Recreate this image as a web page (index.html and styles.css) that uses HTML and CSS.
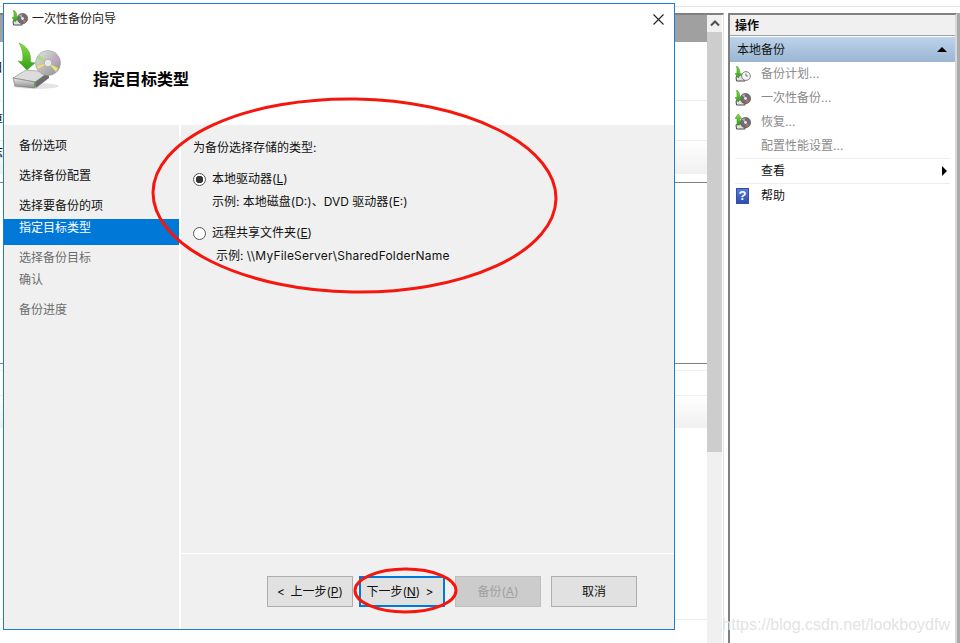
FILE: index.html
```html
<!DOCTYPE html>
<html lang="zh-CN">
<head>
  <meta charset="UTF-8">
  <meta name="viewport" content="width=device-width, initial-scale=1.0">
  <title>一次性备份向导</title>
  <link rel="stylesheet" href="styles.css">
</head>
<body>
  <svg class="defs" width="0" height="0" aria-hidden="true">
    <defs>
      <linearGradient id="green" x1="0" y1="0" x2="0" y2="1">
        <stop offset="0" stop-color="#8fdc45"/>
        <stop offset="1" stop-color="#2f9f18"/>
      </linearGradient>
      <linearGradient id="disc" x1="0" y1="0" x2="1" y2="1">
        <stop offset="0" stop-color="#e6e6e6"/>
        <stop offset="0.5" stop-color="#b9b9b9"/>
        <stop offset="1" stop-color="#8f8f8f"/>
      </linearGradient>
      <linearGradient id="drive" x1="0" y1="0" x2="0" y2="1">
        <stop offset="0" stop-color="#e8e8e8"/>
        <stop offset="1" stop-color="#8d8d8d"/>
      </linearGradient>
      <symbol id="arrow-down" viewBox="0 0 16 16">
        <path d="M1.5 0 C4 1.5 5 4 4.8 7.5 L6.5 7.5 L3.2 12 L0 7.5 L1.8 7.5 C2.2 5 2 2.5 1.5 0 Z" fill="url(#green)" stroke="#2a9414" stroke-width="0.5"/>
      </symbol>
      <symbol id="arrow-up" viewBox="0 0 16 16">
        <path d="M3.2 0 L6.6 4.5 L4.8 4.5 L4.8 11 L2 11 L2 4.5 L0 4.5 Z" fill="url(#green)" stroke="#2a9414" stroke-width="0.5"/>
      </symbol>
      <symbol id="small-drive" viewBox="0 0 16 16">
        <path d="M1 11 L4 9 L11 9 L10 15 L1.5 15 Z" fill="#e2e2e2" stroke="#4a4a4a" stroke-width="1"/>
      </symbol>
      <symbol id="small-disc" viewBox="0 0 16 16">
        <circle cx="10.5" cy="8.5" r="5.2" fill="#6f6f6f" stroke="#4d4d4d" stroke-width="0.5"/>
        <path d="M10.5 8.5 L7 5.5 L9.5 4 Z" fill="#c9a1c9"/>
        <path d="M10.5 8.5 L14 11.5 L12 13 Z" fill="#e06a6a"/>
        <circle cx="10.5" cy="8.5" r="1.4" fill="#e8e8e8"/>
      </symbol>
      <symbol id="small-clock" viewBox="0 0 16 16">
        <circle cx="11" cy="10" r="4.4" fill="#f4f4f4" stroke="#777" stroke-width="0.9"/>
        <path d="M11 7.5 V10 H13" fill="none" stroke="#555" stroke-width="0.8"/>
      </symbol>
    </defs>
  </svg>

  <div class="desktop">
    <div class="top-strip"></div>
    <div class="panes">
      <div class="main-wrap">
        <div class="main-pane">
          <div class="row band"></div>
          <div class="row row-a"><span class="cut">日</span></div>
          <div class="row row-b"><span class="cut">算</span></div>
          <div class="row row-c fade"><span class="cut">志</span></div>
          <div class="row row-d"></div>
          <div class="row row-e"></div>
          <div class="row row-f"></div>
          <div class="row row-g"></div>
          <div class="row row-h fade"></div>
          <div class="row row-i"></div>
        </div>
        <div class="scrollbar">
          <div class="scroll-btn">
            <svg width="10" height="7" viewBox="0 0 10 7"><path d="M1 5.5 L5 1.5 L9 5.5" fill="none" stroke="#505050" stroke-width="2"/></svg>
          </div>
          <div class="scroll-thumb"></div>
        </div>
      </div>

      <div class="actions">
        <div class="actions-head">操作</div>
        <div class="actions-group">
          <span>本地备份</span>
          <span class="caret-up"></span>
        </div>
        <div class="action off">
          <svg class="action-icon" width="16" height="16"><use href="#small-drive"/><use href="#small-clock"/><use href="#arrow-down"/></svg>
          备份计划...
        </div>
        <div class="action off">
          <svg class="action-icon" width="16" height="16"><use href="#small-drive"/><use href="#small-disc"/><use href="#arrow-down"/></svg>
          一次性备份...
        </div>
        <div class="action off">
          <svg class="action-icon" width="16" height="16"><use href="#small-drive"/><use href="#small-disc"/><use href="#arrow-up"/></svg>
          恢复...
        </div>
        <div class="action off no-icon">配置性能设置...</div>
        <div class="action-sep"></div>
        <div class="action no-icon">
          查看
          <span class="caret-right"></span>
        </div>
        <div class="action-sep"></div>
        <div class="action">
          <span class="help-icon">?</span>
          帮助
        </div>
      </div>
    </div>

    <div class="dialog">
      <div class="titlebar">
        <svg class="title-icon" width="16" height="16"><use href="#small-drive"/><use href="#small-disc"/><use href="#arrow-down"/></svg>
        <span class="title-text">一次性备份向导</span>
        <svg class="close" width="11" height="11" viewBox="0 0 11 11"><path d="M0.5 0.5 L10.5 10.5 M10.5 0.5 L0.5 10.5" stroke="#222" stroke-width="1.1"/></svg>
      </div>

      <div class="header">
        <svg class="header-icon" width="50" height="50" viewBox="0 0 50 50">
          <ellipse cx="24" cy="44" rx="23" ry="3" fill="#e4e4e4"/>
          <path d="M1 36 L14 28 L37 30 L23 40 Z" fill="#dcdcdc" stroke="#8a8a8a" stroke-width="0.6"/>
          <path d="M1 36 L23 40 L23 46 L3 44 Z" fill="url(#drive)" stroke="#6f6f6f" stroke-width="0.6"/>
          <path d="M23 40 L37 30 L37 36 L24 46 Z" fill="#6d6d6d"/>
          <rect x="22.4" y="40.5" width="1.6" height="4" fill="#34b12a"/>
          <circle cx="36" cy="21" r="12.5" fill="url(#disc)" stroke="#8c8c8c" stroke-width="0.5"/>
          <path d="M36 21 L25 17 L27 13 Z" fill="#a9dd7a"/>
          <path d="M36 21 L25 24 L26 27 Z" fill="#efe26c"/>
          <path d="M36 21 L47 18 L46 14 Z" fill="#d69ad2"/>
          <path d="M36 21 L46 26 L44 30 Z" fill="#e6e27c"/>
          <circle cx="36" cy="21" r="3.6" fill="#f3f3f3" stroke="#9a9a9a" stroke-width="0.6"/>
          <circle cx="36" cy="21" r="1.3" fill="#fff" stroke="#aaa" stroke-width="0.4"/>
          <path d="M7 1 C15 4 19.5 11 18.5 20 L23 21 L15 28 L6 19 L10.5 19.5 C11.5 13 10.5 7 7 1 Z" fill="url(#green)" stroke="#3da822" stroke-width="0.5"/>
        </svg>
        <h1 class="heading">指定目标类型</h1>
      </div>

      <div class="body">
        <div class="nav">
          <div class="nav-item">备份选项</div>
          <div class="nav-item">选择备份配置</div>
          <div class="nav-item tight">选择要备份的项</div>
          <div class="nav-item current">指定目标类型</div>
          <div class="nav-item tight off">选择备份目标</div>
          <div class="nav-item off">确认</div>
          <div class="nav-item off">备份进度</div>
        </div>

        <div class="content">
          <div class="options">
            <div class="prompt">为备份选择存储的类型:</div>
            <div class="radio-row">
              <span class="radio checked"></span>
              <span>本地驱动器(<u>L</u>)</span>
            </div>
            <div class="hint">示例: 本地磁盘(D:)、DVD 驱动器(E:)</div>
            <div class="radio-row second">
              <span class="radio"></span>
              <span>远程共享文件夹(<u>E</u>)</span>
            </div>
            <div class="hint shifted">示例: <span class="share-path">\\MyFileServer\SharedFolderName</span></div>
          </div>

          <div class="footer">
            <button class="btn wide-gap">&lt; 上一步(<u>P</u>)</button>
            <button class="btn primary">下一步(<u>N</u>) &gt;</button>
            <button class="btn disabled">备份(<u>A</u>)</button>
            <button class="btn">取消</button>
          </div>
        </div>
      </div>
    </div>

    <svg class="marks" width="960" height="643" viewBox="0 0 960 643">
      <ellipse cx="354.5" cy="195.5" rx="201.5" ry="96.5" transform="rotate(1 354.5 195.5)"/>
      <ellipse cx="405.5" cy="590.5" rx="50.5" ry="21.5"/>
    </svg>

    <div class="watermark">https://blog.csdn.net/lookboydfw</div>
  </div>
</body>
</html>
```

FILE: styles.css
```css
* {
  box-sizing: border-box;
}
html, body {
  margin: 0;
  padding: 0;
}
body {
  font-family: "Inter", "Noto Sans CJK SC", sans-serif;
  font-size: 12px;
  line-height: 16px;
  color: #111;
  background: #fff;
}
.defs {
  position: absolute;
}
.desktop {
  position: relative;
  width: 960px;
  height: 643px;
  overflow: hidden;
  background: #fff;
}
.top-strip {
  height: 13px;
  padding-top: 6px;
}
.top-strip::before {
  content: "";
  display: block;
  height: 1px;
  background: #e6e6e6;
}
.panes {
  display: flex;
  height: 630px;
}

/* window behind the dialog */
.main-wrap {
  display: flex;
  width: 724px;
  border-top: 2px solid #808080;
  border-right: 1px solid #e2e2e2;
}
.main-pane {
  width: 707px;
  overflow: hidden;
}
.row {
  border-bottom: 1px solid #eee;
}
.cut {
  display: block;
  margin-left: -9px;
}
.band {
  height: 27px;
  background: #a0a0a0;
  border-bottom: 0;
}
.row-a {
  height: 59px;
  padding-top: 18px;
}
.row-b {
  height: 40px;
  padding-top: 11px;
}
.row-c {
  height: 33px;
  padding-top: 4px;
  border-bottom: 0;
}
.fade {
  background: linear-gradient(#fff, #f0f0f0);
}
.row-d {
  height: 9px;
  border-bottom-color: #808080;
}
.row-e {
  height: 181px;
  border-bottom-color: #808080;
}
.row-f {
  height: 7px;
}
.row-g {
  height: 25px;
}
.row-h {
  height: 32px;
  border-bottom: 0;
}
.row-i {
  height: 192px;
}
.scrollbar {
  width: 15px;
  background: #f0f0f0;
}
.scroll-btn {
  display: flex;
  align-items: center;
  justify-content: center;
  height: 17px;
}
.scroll-thumb {
  height: 420px;
  background: #cdcdcd;
}

/* actions pane on the right */
.actions {
  width: 229px;
  margin-left: 4px;
  border-top: 2px solid #808080;
  border-left: 2px solid #808080;
  border-right: 2px solid #d8d8d8;
}
.actions-head {
  height: 21px;
  padding: 3px 5px 0;
  font-weight: bold;
  background: #f0f0f0;
  border-bottom: 1px solid #a0a0a0;
}
.actions-group {
  display: flex;
  align-items: center;
  justify-content: space-between;
  height: 25px;
  margin-top: 1px;
  padding: 0 8px 0 7px;
  background: linear-gradient(#bcd3ea, #9bb6d3);
}
.caret-up {
  width: 0;
  height: 0;
  border-left: 5px solid transparent;
  border-right: 5px solid transparent;
  border-bottom: 5px solid #000;
}
.caret-right {
  width: 0;
  height: 0;
  margin-left: auto;
  margin-right: 8px;
  border-top: 5px solid transparent;
  border-bottom: 5px solid transparent;
  border-left: 5px solid #000;
}
.action {
  display: flex;
  align-items: center;
  height: 24px;
  padding-left: 5px;
}
.action.off {
  color: #8a8a8a;
}
.action.no-icon {
  padding-left: 31px;
}
.action-icon {
  margin-right: 10px;
  flex: none;
}
.action-sep {
  height: 1px;
  margin: 0 5px;
  background: #eee;
}
.help-icon {
  width: 13px;
  height: 16px;
  margin: 0 12px 0 1px;
  font-family: "Liberation Sans", sans-serif;
  font-size: 13px;
  font-weight: bold;
  line-height: 14px;
  text-align: center;
  color: #fff;
  background: linear-gradient(#5a78d8, #2f4fb0);
  border: 1px solid #3350a8;
}
.desktop::after {
  content: "";
  position: absolute;
  top: 13px;
  right: 0;
  bottom: 0;
  width: 3px;
  background: #aaa;
}

/* wizard dialog */
.dialog {
  position: absolute;
  left: 3px;
  top: 3px;
  width: 672px;
  height: 627px;
  display: flex;
  flex-direction: column;
  background: #fff;
  border: 1px solid #1a7fd0;
}
.titlebar {
  display: flex;
  align-items: center;
  flex: none;
  height: 30px;
  padding: 0 10px 0 8px;
}
.title-icon {
  margin-right: 4px;
  margin-top: -2px;
}
.title-text {
  flex: 1;
  color: #222;
}
.header {
  display: flex;
  flex: none;
  align-items: center;
  height: 91px;
  padding: 0 0 2px 8px;
}
.header-icon {
  align-self: flex-start;
  margin-top: 8px;
  margin-right: 31px;
  flex: none;
}
.heading {
  margin: 0;
  font-size: 16px;
  line-height: 22px;
  font-weight: bold;
  color: #000;
}
.body {
  display: flex;
  flex: 1;
  min-height: 0;
}
.nav {
  width: 175px;
  padding-top: 12px;
  background: #f0f0f0;
}
.nav-item {
  height: 30px;
  padding: 1px 0 0 15px;
}
.nav-item.tight {
  height: 22px;
}
.nav-item.off {
  color: #6d6d6d;
}
.nav-item.current {
  height: 26px;
  margin-bottom: 4px;
  color: #fff;
  background: #0078d7;
}
.content {
  display: flex;
  flex-direction: column;
  flex: 1;
  margin-left: 2px;
  background: #f0f0f0;
}
.options {
  flex: 1;
  padding: 15px 0 0 12px;
}
.prompt {
  margin-bottom: 15px;
}
.radio-row {
  display: flex;
  align-items: center;
  gap: 6px;
}
.radio-row.second {
  margin-top: 15px;
}
.radio {
  width: 13px;
  height: 13px;
  border: 1px solid #555;
  border-radius: 50%;
  background: #fff;
}
.radio.checked {
  background: radial-gradient(circle, #333 0 3.5px, #fff 4px);
}
.hint {
  margin-top: 7px;
  padding-left: 19px;
}
.hint.shifted {
  padding-left: 23px;
}
.share-path {
  letter-spacing: 0.2px;
}
.footer {
  display: flex;
  justify-content: flex-end;
  flex: none;
  height: 76px;
  padding: 22px 37px 0 0;
  gap: 10px;
  border-top: 1px solid #fff;
}
.btn {
  width: 86px;
  height: 31px;
  padding: 0;
  font: inherit;
  word-spacing: 2px;
  color: #111;
  background: #e1e1e1;
  border: 1px solid #adadad;
}
.btn.wide-gap {
  margin-right: -4px;
}
.btn.primary {
  padding-right: 4px;
  border: 2px solid #0078d7;
}
.btn.disabled {
  color: #a0a0a0;
  background: #cccccc;
  border-color: #bfbfbf;
}

/* annotations drawn over the screenshot */
.marks {
  position: absolute;
  left: 0;
  top: 0;
  fill: none;
  stroke: #f5170e;
  stroke-width: 3;
}
.watermark {
  position: absolute;
  right: 10px;
  bottom: 9px;
  font-family: "Liberation Sans", sans-serif;
  font-size: 16px;
  line-height: 18px;
  color: #e3e3e3;
}
```
